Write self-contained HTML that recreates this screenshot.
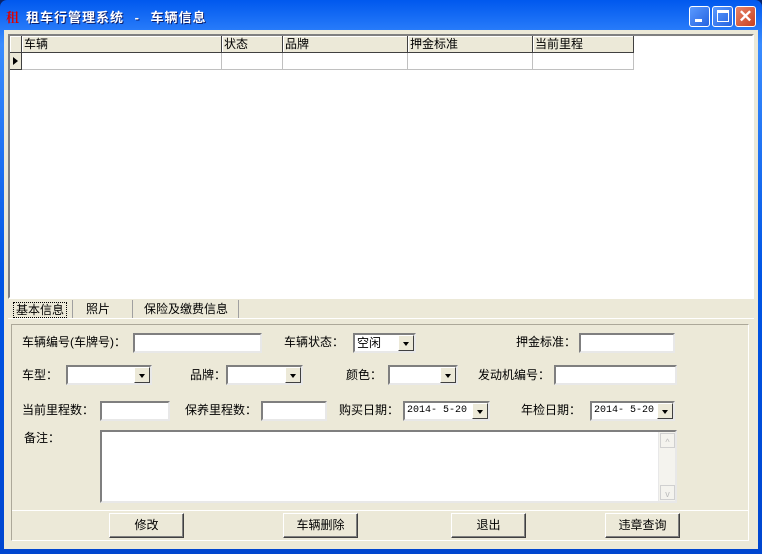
<!DOCTYPE html>
<html><head><meta charset="utf-8"><style>
*{box-sizing:border-box;margin:0;padding:0}
body{width:762px;height:554px;overflow:hidden;font-family:"SimSun","Liberation Sans","Noto Sans CJK SC",sans-serif;font-size:12px;color:#000;background:#0a246a}
.win{position:absolute;left:0;top:0;width:762px;height:554px;background:linear-gradient(#0058ee,#3a8cff 8%,#0055e5 50%,#0046d0);border-radius:7px 7px 0 0}
.title{position:absolute;left:26px;top:7px;color:#fff;font-weight:bold;font-size:13px;letter-spacing:1px;word-spacing:6px;text-shadow:1px 1px #0a1e6e;font-family:"Liberation Sans","Noto Sans CJK SC",sans-serif}
.ico{position:absolute;left:6px;top:7px;color:#d00;font-weight:bold;font-size:13px;font-family:"Noto Serif CJK SC",serif}
.tb{position:absolute;top:6px;width:21px;height:21px;border:1px solid #fff;border-radius:3px;background:linear-gradient(135deg,#5a9aff,#2563e0)}
.client{position:absolute;left:4px;top:30px;width:754px;height:519px;background:#ece9d8}
.a{position:absolute}
.grid{position:absolute;left:8px;top:34px;width:746px;height:265px;background:#fff;border:2px solid;border-color:#808080 #fff #fff #808080}
.hd{position:absolute;top:0;height:17px;background:#ece9d8;border-right:1px solid #404040;border-bottom:1px solid #404040;box-shadow:inset 1px 1px #fff;padding:1px 2px;line-height:14px}
.cell{position:absolute;top:17px;height:17px;border-right:1px solid #c0c0c0;border-bottom:1px solid #c0c0c0}
.in{position:absolute;height:20px;background:#fff;border:2px solid;border-color:#7f7f7f #e8e8e8 #e8e8e8 #7f7f7f;line-height:16px;padding-left:2px;overflow:hidden}
.dd{position:absolute;right:0;top:0;width:16px;height:16px;background:#ece9d8;border:1px solid;border-color:#fff #404040 #404040 #fff}
.dd:after{content:"";position:absolute;left:4px;top:6px;border:3px solid transparent;border-top:4px solid #000}
.dt{font-family:'Liberation Mono',monospace;font-size:10px}
.lb{position:absolute;line-height:14px}
.btn{position:absolute;top:513px;width:75px;height:25px;background:#ece9d8;border:1px solid;border-color:#fff #404040 #404040 #fff;box-shadow:inset -1px -1px #808080;text-align:center;line-height:22px}
</style></head><body>
<div class="win">
<div class="ico">租</div><div class="title">租车行管理系统 - 车辆信息</div>
<div class="tb" style="left:689px"><div class="a" style="left:5px;top:12px;width:7px;height:3px;background:#fff"></div></div>
<div class="tb" style="left:712px"><div class="a" style="left:4px;top:3px;width:12px;height:12px;border:1px solid #fff;border-top:3px solid #fff"></div></div>
<div class="tb" style="left:735px;background:linear-gradient(135deg,#e8856a,#c7401f);color:#fff;font:bold 17px 'Liberation Sans';text-align:center;line-height:19px">✕</div>
<div class="client"></div>
<div class="grid">
<div class="hd" style="left:0;width:12px"></div>
<div class="hd" style="left:12px;width:200px">车辆</div>
<div class="hd" style="left:212px;width:61px">状态</div>
<div class="hd" style="left:273px;width:125px">品牌</div>
<div class="hd" style="left:398px;width:125px">押金标准</div>
<div class="hd" style="left:523px;width:101px">当前里程</div>
<div class="cell" style="left:0;width:12px;background:#ece9d8;border-right:1px solid #404040;border-bottom:1px solid #404040"><div class="a" style="left:3px;top:4px;border:4px solid transparent;border-left:5px solid #000"></div></div>
<div class="cell" style="left:12px;width:200px"></div>
<div class="cell" style="left:212px;width:61px"></div>
<div class="cell" style="left:273px;width:125px"></div>
<div class="cell" style="left:398px;width:125px"></div>
<div class="cell" style="left:523px;width:101px"></div>
</div>
<div class="a" style="left:8px;top:318px;width:746px;height:1px;background:#fff"></div>
<div class="lb" style="left:13px;top:302px;border:1px dotted #000;padding:0 2px">基本信息</div>
<div class="a" style="left:72px;top:300px;width:1px;height:18px;background:#a0a0a0"></div>
<div class="lb" style="left:86px;top:302px">照片</div>
<div class="a" style="left:132px;top:300px;width:1px;height:18px;background:#a0a0a0"></div>
<div class="lb" style="left:144px;top:302px">保险及缴费信息</div>
<div class="a" style="left:238px;top:300px;width:1px;height:18px;background:#a0a0a0"></div>
<div class="a" style="left:11px;top:324px;width:738px;height:217px;border:1px solid;border-color:#aca899 #fff #fff #aca899"></div>
<div class="a" style="left:12px;top:510px;width:736px;height:1px;background:#aca899;border-bottom:1px solid #fff"></div>
<div class="lb" style="left:22px;top:335px">车辆编号(车牌号)：</div>
<div class="in" style="left:133px;top:333px;width:129px"></div>
<div class="lb" style="left:284px;top:335px">车辆状态：</div>
<div class="in" style="left:353px;top:333px;width:63px">空闲<div class="dd"></div></div>
<div class="lb" style="left:516px;top:335px">押金标准：</div>
<div class="in" style="left:579px;top:333px;width:96px"></div>
<div class="lb" style="left:22px;top:368px">车型：</div>
<div class="in" style="left:66px;top:365px;width:86px"><div class="dd"></div></div>
<div class="lb" style="left:190px;top:368px">品牌：</div>
<div class="in" style="left:226px;top:365px;width:77px"><div class="dd"></div></div>
<div class="lb" style="left:346px;top:368px">颜色：</div>
<div class="in" style="left:388px;top:365px;width:70px"><div class="dd"></div></div>
<div class="lb" style="left:478px;top:368px">发动机编号：</div>
<div class="in" style="left:554px;top:365px;width:123px"></div>
<div class="lb" style="left:22px;top:403px">当前里程数：</div>
<div class="in" style="left:100px;top:401px;width:70px"></div>
<div class="lb" style="left:185px;top:403px">保养里程数：</div>
<div class="in" style="left:261px;top:401px;width:66px"></div>
<div class="lb" style="left:339px;top:403px">购买日期：</div>
<div class="in dt" style="left:403px;top:401px;width:87px">2014- 5-20<div class="dd"></div></div>
<div class="lb" style="left:521px;top:403px">年检日期：</div>
<div class="in dt" style="left:590px;top:401px;width:85px">2014- 5-20<div class="dd"></div></div>
<div class="lb" style="left:24px;top:431px">备注：</div>
<div class="in" style="left:100px;top:430px;width:577px;height:73px"><div class="a" style="right:0;top:0;width:17px;height:69px;background:#f4f3ee;border-left:1px solid #e8e8e8"><div class="a" style="left:1px;top:1px;width:15px;height:15px;border:1px solid #d0d0d0;color:#bbb;font-size:9px;text-align:center">^</div><div class="a" style="left:1px;bottom:1px;width:15px;height:15px;border:1px solid #d0d0d0;color:#bbb;font-size:9px;text-align:center">v</div></div></div>
<div class="btn" style="left:109px">修改</div>
<div class="btn" style="left:283px">车辆删除</div>
<div class="btn" style="left:451px">退出</div>
<div class="btn" style="left:605px">违章查询</div>
</div>
</body></html>
